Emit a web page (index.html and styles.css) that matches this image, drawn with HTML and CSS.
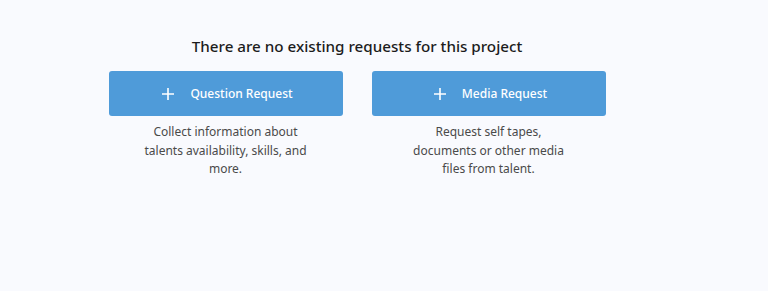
FILE: index.html
```html
<!DOCTYPE html>
<html lang="en">
<head>
    <meta charset="UTF-8">
    <meta name="viewport" content="width=device-width, initial-scale=1.0">
    <title>Requests</title>
    <link rel="stylesheet" href="styles.css">
</head>
<body>
    <div class="page">
        <div class="empty-state">
            <h2>There are no existing requests for this project</h2>
            <div class="options">
                <div class="option">
                    <button class="add-btn" type="button">
                        <svg width="12" height="12" viewBox="0 0 12 12"><path d="M6 0v12M0 6h12" stroke="#fff" stroke-width="1.6" fill="none"/></svg>
                        <span>Question Request</span>
                    </button>
                    <p>Collect information about talents availability, skills, and more.</p>
                </div>
                <div class="option">
                    <button class="add-btn" type="button">
                        <svg width="12" height="12" viewBox="0 0 12 12"><path d="M6 0v12M0 6h12" stroke="#fff" stroke-width="1.6" fill="none"/></svg>
                        <span>Media Request</span>
                    </button>
                    <p>Request self tapes, documents or other media files from talent.</p>
                </div>
            </div>
        </div>
    </div>
</body>
</html>
```

FILE: styles.css
```css
body {
    margin: 0;
    font-family: 'Noto Sans', sans-serif;
    background-color: #f9fafe;
    height: 100vh;
}
.page {
    width: 714px;
    display: flex;
    justify-content: center;
    padding-top: 35px;
}
.empty-state {
    display: flex;
    flex-direction: column;
    align-items: center;
}
h2 {
    margin: 0 0 14px;
    font-size: 15.2px;
    font-weight: 500;
    color: #1c1c1c;
    line-height: 22px;
}
.options {
    display: flex;
    gap: 29px;
}
.option {
    width: 234px;
    display: flex;
    flex-direction: column;
    align-items: center;
}
.add-btn {
    width: 100%;
    height: 45px;
    border: none;
    border-radius: 3px;
    background-color: #4f9bd9;
    color: #fff;
    font-family: inherit;
    font-size: 12px;
    font-weight: 500;
    display: flex;
    align-items: center;
    justify-content: center;
    gap: 16px;
    padding: 0 0 0 4px;
    cursor: pointer;
}
.option p {
    margin: 7px 0 0;
    max-width: 172px;
    text-align: center;
    font-size: 12px;
    line-height: 18.5px;
    color: #4a4a4a;
}
```
